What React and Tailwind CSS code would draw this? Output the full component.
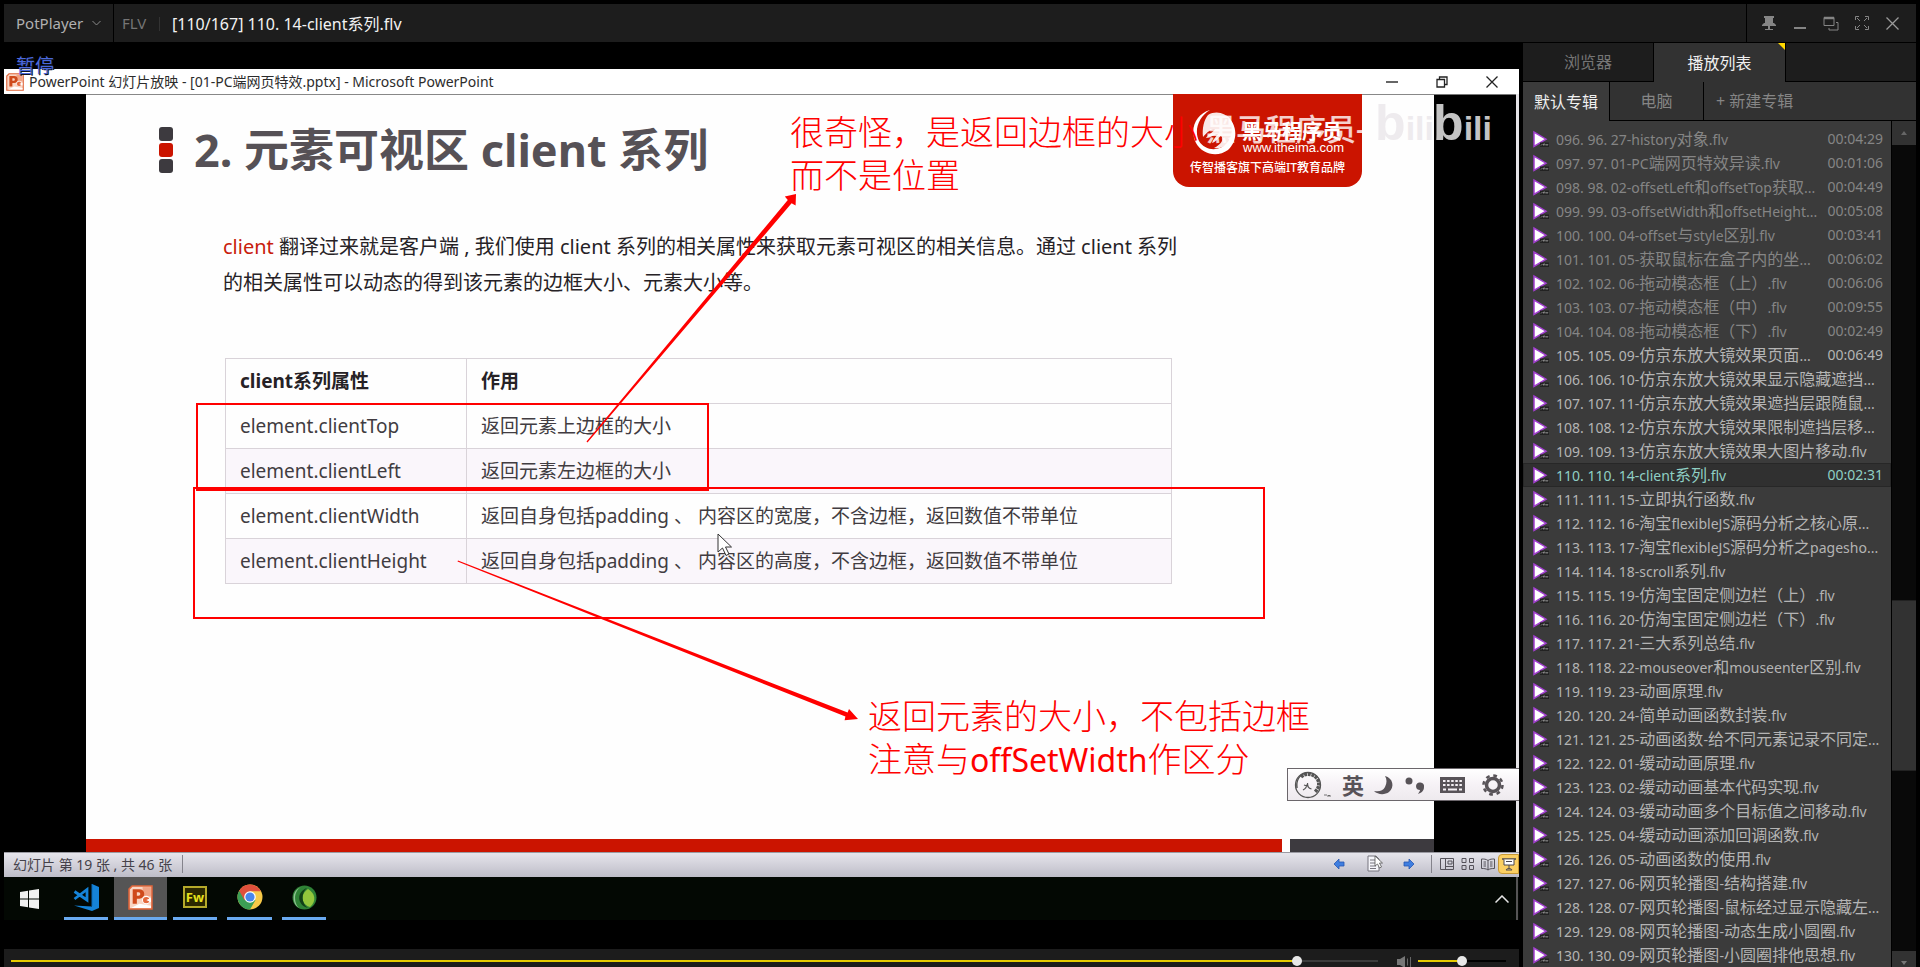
import React from "react";

const PLAYLIST = [
  ["096. 96. 27-history对象.flv", "00:04:29", "seen"],
  ["097. 97. 01-PC端网页特效异读.flv", "00:01:06", "seen"],
  ["098. 98. 02-offsetLeft和offsetTop获取...", "00:04:49", "seen"],
  ["099. 99. 03-offsetWidth和offsetHeight...", "00:05:08", "seen"],
  ["100. 100. 04-offset与style区别.flv", "00:03:41", "seen"],
  ["101. 101. 05-获取鼠标在盒子内的坐...", "00:06:02", "seen"],
  ["102. 102. 06-拖动模态框（上）.flv", "00:06:06", "seen"],
  ["103. 103. 07-拖动模态框（中）.flv", "00:09:55", "seen"],
  ["104. 104. 08-拖动模态框（下）.flv", "00:02:49", "seen"],
  ["105. 105. 09-仿京东放大镜效果页面...", "00:06:49", "new"],
  ["106. 106. 10-仿京东放大镜效果显示隐藏遮挡...", "", "new"],
  ["107. 107. 11-仿京东放大镜效果遮挡层跟随鼠...", "", "new"],
  ["108. 108. 12-仿京东放大镜效果限制遮挡层移...", "", "new"],
  ["109. 109. 13-仿京东放大镜效果大图片移动.flv", "", "new"],
  ["110. 110. 14-client系列.flv", "00:02:31", "current"],
  ["111. 111. 15-立即执行函数.flv", "", "new"],
  ["112. 112. 16-淘宝flexibleJS源码分析之核心原...", "", "new"],
  ["113. 113. 17-淘宝flexibleJS源码分析之pagesho...", "", "new"],
  ["114. 114. 18-scroll系列.flv", "", "new"],
  ["115. 115. 19-仿淘宝固定侧边栏（上）.flv", "", "new"],
  ["116. 116. 20-仿淘宝固定侧边栏（下）.flv", "", "new"],
  ["117. 117. 21-三大系列总结.flv", "", "new"],
  ["118. 118. 22-mouseover和mouseenter区别.flv", "", "new"],
  ["119. 119. 23-动画原理.flv", "", "new"],
  ["120. 120. 24-简单动画函数封装.flv", "", "new"],
  ["121. 121. 25-动画函数-给不同元素记录不同定...", "", "new"],
  ["122. 122. 01-缓动动画原理.flv", "", "new"],
  ["123. 123. 02-缓动动画基本代码实现.flv", "", "new"],
  ["124. 124. 03-缓动动画多个目标值之间移动.flv", "", "new"],
  ["125. 125. 04-缓动动画添加回调函数.flv", "", "new"],
  ["126. 126. 05-动画函数的使用.flv", "", "new"],
  ["127. 127. 06-网页轮播图-结构搭建.flv", "", "new"],
  ["128. 128. 07-网页轮播图-鼠标经过显示隐藏左...", "", "new"],
  ["129. 129. 08-网页轮播图-动态生成小圆圈.flv", "", "new"],
  ["130. 130. 09-网页轮播图-小圆圈排他思想.flv", "", "new"],
];

const ROW_TONE = {
  seen: "text-[#858585] border-transparent",
  new: "text-[#b4b4b4] border-transparent",
  current: "text-[#8fcfc4] bg-[#303030] border-[#272727]",
};

const ATTRIBUTES = [
  ["element.clientTop", "返回元素上边框的大小"],
  ["element.clientLeft", "返回元素左边框的大小"],
  ["element.clientWidth", "返回自身包括padding 、 内容区的宽度，不含边框，返回数值不带单位"],
  ["element.clientHeight", "返回自身包括padding 、 内容区的高度，不含边框，返回数值不带单位"],
];

/* Chinese runs are set two pixels larger than the Latin text around them. */
function Mixed({ text }) {
  return text.split(/([\u3000-\u9fff\uff00-\uffef]+)/).map((part, i) =>
    i % 2 ? (
      <span key={i} className="text-[16px]">{part}</span>
    ) : (
      part
    )
  );
}

function IconButton({ label, className, children }) {
  return (
    <button type="button" aria-label={label} className={`flex items-center justify-center ${className}`}>
      {children}
    </button>
  );
}

function Header() {
  return (
    <header className="flex h-[38px] shrink-0 bg-[#1d1d1d] text-[#8a8a8a]">
      <button type="button" className="flex w-[110px] items-center justify-between border-r border-black pr-3 pl-3 text-[15px] text-[#b0b0b0]">
        PotPlayer
        <svg width="9" height="6" viewBox="0 0 9 6" fill="none" stroke="#8a8a8a"><path d="M.5 1l4 4 4-4" /></svg>
      </button>
      <div className="flex flex-1 items-center pt-px pl-2">
        <span className="w-[37px] text-[15px] text-[#757575]">FLV</span>
        <span className="h-[14px] w-px bg-[#333]" />
        <span className="pl-3 text-[16px] text-[#f2f2f2]">[110/167] 110. 14-client系列.flv</span>
      </div>
      <div className="flex items-center border-l border-black pr-2 pl-[6px]">
        <IconButton label="置顶" className="size-[31px]">
          <svg width="14" height="16" viewBox="0 0 14 16" fill="#858585"><path d="M2 1h10v2h-1v5h1l2 2v1H0v-1l2-2h1V3H2zM6 11h2v3h3v1H3v-1h3z" /></svg>
        </IconButton>
        <IconButton label="最小化" className="size-[31px]">
          <svg width="14" height="16" viewBox="0 0 14 16" fill="#858585"><path d="M1 12h12v2H1z" /></svg>
        </IconButton>
        <IconButton label="还原" className="size-[31px]">
          <svg width="16" height="15" viewBox="0 0 16 15" fill="none" stroke="#858585"><path d="M1 1.500h10v8H1z" /><path d="M1 2h10" strokeWidth="2.500" /><path d="M13 6.500h2v7.500H6v-2" /></svg>
        </IconButton>
        <IconButton label="全屏" className="size-[31px]">
          <svg width="14" height="14" viewBox="0 0 14 14" fill="none" stroke="#858585"><path d="M.5 4V.5H4M10 .5h3.500V4M13.500 10v3.500H10M4 13.500H.5V10M2 2l3 3M12 2L9 5M12 12L9 9M2 12l3-3" /></svg>
        </IconButton>
        <IconButton label="关闭" className="size-[31px]">
          <svg width="13" height="13" viewBox="0 0 13 13" fill="none" stroke="#9a9a9a" strokeWidth="1.300"><path d="M.5 .5l12 12M12.500 .5l-12 12" /></svg>
        </IconButton>
      </div>
    </header>
  );
}

function PlayIcon() {
  return (
    <svg width="16" height="18" viewBox="0 0 16 18" className="shrink-0">
      <path d="M1 2v14.500L13 9.200z" fill="#fff" stroke="#a23fd0" strokeWidth="1.500" />
      <path d="M7 12.500h9V17H7z" fill="#222" />
      <path d="M8 15.500l1.500-1.500M10.500 15.500v-1.500h1.500v1.500M13 14l1 1.500 1-1.500" stroke="#aaa" strokeWidth=".7" fill="none" />
    </svg>
  );
}

function Sidebar() {
  return (
    <aside className="flex w-[393px] shrink-0 flex-col bg-[#1d1d1d]">
      <div className="flex h-[39px] shrink-0 border-b border-black text-[16px]">
        <button type="button" className="w-[131px] border-r border-black text-[#757575]">浏览器</button>
        <button type="button" className="relative -mb-px w-[131px] bg-[#323232] text-[#f0f0f0]">
          播放列表
          <svg width="7" height="7" viewBox="0 0 7 7" className="absolute top-0 right-0" fill="#ffd800"><path d="M0 0h7v7z" /></svg>
        </button>
        <span className="flex-1 border-l border-black" />
      </div>
      <div className="flex h-[39px] shrink-0 bg-[#323232] text-[16px] text-[#858585]">
        <button type="button" className="w-[86px] bg-[#3b3b3b] text-[#f0f0f0]">默认专辑</button>
        <button type="button" className="w-[95px] border-x border-b border-black">电脑</button>
        <button type="button" className="flex-1 border-b border-black pl-3 text-left">+ 新建专辑</button>
      </div>
      <div className="flex min-h-0 flex-1">
        <ul className="min-w-0 flex-1 overflow-hidden bg-[#3b3b3b] pt-[6px] text-[14px]">
          {PLAYLIST.map(([name, time, state]) => (
            <li key={name}>
              <button type="button" className={`flex h-6 w-full items-center gap-[7px] border pr-[7px] pl-[9px] text-left leading-[22px] whitespace-nowrap ${ROW_TONE[state]}`}>
                <PlayIcon />
                <span className="flex-1"><Mixed text={name} /></span>
                <span>{time}</span>
              </button>
            </li>
          ))}
        </ul>
        <div className="flex w-[25px] flex-col border-l border-black bg-[#090909]">
          <IconButton label="向上滚动" className="h-6 shrink-0 bg-[#323232]">
            <svg width="6" height="4" viewBox="0 0 6 4" fill="#666"><path d="M3 0l3 4H0z" /></svg>
          </IconButton>
          <div className="flex min-h-0 flex-1 flex-col">
            <span className="grow-[456]" />
            <span className="grow-[170] border-y border-[#222] bg-[#323232]" />
            <span className="grow-[180]" />
          </div>
          <IconButton label="向下滚动" className="h-4 shrink-0 bg-[#323232] pt-2">
            <svg width="6" height="4" viewBox="0 0 6 4" fill="#777"><path d="M3 4L0 0h6z" /></svg>
          </IconButton>
        </div>
      </div>
    </aside>
  );
}

function PowerPointMark({ size }) {
  return (
    <svg width={size} height={size} viewBox="0 0 24 24">
      <path d="M4 1h19v22H1V4z" fill="#f9d5c3" stroke="#e0653a" strokeWidth="1.500" />
      <path d="M14 2h8v9h-8z" fill="#f0a385" />
      <path d="M4.500 18V4h6.500a4.600 4.600 0 0 1 0 9.200H8.500V18zM8.500 7v3.300h1.700a1.650 1.650 0 0 0 0-3.300z" fill="#cf4a1c" fillRule="evenodd" />
      <circle cx="17.500" cy="14.500" r="3.600" fill="#e4683c" stroke="#fff" />
      <path d="M17.500 14.500l4.500-2v4zM3 22l8-4 11 2v2z" fill="#fff" />
    </svg>
  );
}

function WindowTitle() {
  return (
    <div className="flex h-[25px] shrink-0 items-center bg-white pr-[2px] pl-[2px] text-[#2c2c2c]">
      <PowerPointMark size={18} />
      <span className="flex-1 pl-[5px] text-[14px]">PowerPoint 幻灯片放映 - [01-PC端网页特效.pptx] - Microsoft PowerPoint</span>
      <IconButton label="最小化窗口" className="h-6 w-[50px]">
        <svg width="12" height="12" viewBox="0 0 12 12" stroke="#333" strokeWidth="1.500"><path d="M0 6h12" /></svg>
      </IconButton>
      <IconButton label="还原窗口" className="h-6 w-[50px]">
        <svg width="12" height="12" viewBox="0 0 12 12" fill="none" stroke="#222" strokeWidth="1.300"><path d="M1 3.500h7.500V11H1zM3.500 3.500V1H11v7.500H8.500" /></svg>
      </IconButton>
      <IconButton label="关闭窗口" className="h-6 w-[50px]">
        <svg width="12" height="12" viewBox="0 0 12 12" stroke="#222" strokeWidth="1.300"><path d="M.5 .5l11 11M11.500 .5l-11 11" /></svg>
      </IconButton>
    </div>
  );
}

function BrandBadge() {
  return (
    <div className="absolute top-0 right-[72px] h-[93px] w-[189px] rounded-b-2xl bg-[#cb1400] text-white">
      <svg width="48" height="48" viewBox="0 0 48 48" className="absolute top-[15px] left-[17px]">
        <path d="M20 1C6 5-1 20 6 34c6 11 21 15 32 7C49 31 47 14 36 6c7 8 8 20 1 28-8 9-22 8-28-2C4 22 8 8 20 1z" fill="#fff" />
        <path d="M18 6c8-5 18-2 22 5 4 8 3 18-3 24-3 3-8 5-13 4 8-4 10-9 7-12-3 2-5 6-9 7 1-4 4-6 6-9-4 0-7 4-12 4 2-4 7-5 9-9-4 0-8 3-12 8-1-9 1-17 5-22z" fill="#fff" opacity=".9" />
      </svg>
      <span className="absolute top-[26px] left-[69px] text-[20px] leading-[24px] font-bold whitespace-nowrap">黑马程序员</span>
      <span className="absolute top-[17px] left-[33px] text-[30px] leading-[36px] font-medium whitespace-nowrap text-white/80">黑马程序员-</span>
      <span className="absolute top-[46px] left-[70px] font-['Liberation_Sans',sans-serif] text-[13px] leading-[16px] whitespace-nowrap">www.itheima.com</span>
      <span className="absolute top-[65px] left-[17px] text-[12px] leading-[18px] font-medium whitespace-nowrap">传智播客旗下高端IT教育品牌</span>
    </div>
  );
}

function Annotations() {
  return (
    <div className="pointer-events-none absolute inset-0">
      <svg className="absolute inset-0 size-full" fill="none">
        <rect x="111" y="310" width="511" height="86" stroke="#f00" strokeWidth="2" />
        <rect x="108" y="394" width="1070" height="130" stroke="#f00" strokeWidth="2" />
        <path d="M501.500 348.500L705.600 109.200l4 2.200L710 100l-11.200 2.400 3 3.600L500.500 347.500z" fill="#f00" />
        <path d="M372 466.500L761.600 618.600 763 615l9 10-13.400 1.200.8-3.600L371.500 467.500z" fill="#f00" />
        <path d="M632 440v18l4.500-4 3.500 7.500 3-1.500-3.500-7h6z" fill="#fff" stroke="#333" />
      </svg>
      <p className="absolute top-[17px] left-[704px] text-[34px] leading-[43px] font-light whitespace-nowrap text-[#f00]">
        很奇怪，是返回边框的大小<br />而不是位置
      </p>
      <p className="absolute top-[601px] left-[782px] text-[34px] leading-[43px] font-light whitespace-nowrap text-[#f00]">
        返回元素的大小，不包括边框<br />注意与<span className="text-[32px] font-normal">offSetWidth</span>作区分
      </p>
    </div>
  );
}

function Watermark({ className }) {
  return (
    <span className={`absolute top-0 flex items-baseline font-['Liberation_Sans_Narrow','Liberation_Sans',sans-serif] text-[50px] leading-[58px] font-bold ${className}`}>
      b<span className="text-[34px]">ili</span>
    </span>
  );
}

function InputBar() {
  return (
    <div className="absolute right-0 bottom-[51px] flex h-[33px] w-[232px] items-center border border-r-0 border-[#6b666b] bg-linear-to-b from-white via-[#f6f2f6] to-[#eeeaee] text-[#585358]">
      <svg width="42" height="30" viewBox="0 0 42 30" className="ml-1" fill="none" stroke="#555">
        <circle cx="16" cy="15" r="12.500" strokeWidth="1.300" />
        <path d="M9 7c5-5 14-3 17 3 2 5 0 9-3 12" strokeWidth="3.500" strokeDasharray="3 .7" />
        <path d="M5 18C4 11 7 5 14 3" strokeWidth="1.500" />
        <path d="M11 20c2-1 4-3 4.500-7 0 4 1 5 4 6M15 16l-3-1" strokeWidth="1.200" />
        <path d="M32 25h3M36 27v-2l1 1 1-1v2" strokeWidth=".8" />
      </svg>
      <span className="ml-2 w-[26px] text-[22px] leading-none font-bold">英</span>
      <svg width="28" height="22" viewBox="0 0 28 22" className="ml-1" fill="#585358"><path d="M13 2c8 2 10 11 4 16-4 3-11 3-15-1 5 1 9 0 11-4 2-4 2-8 0-11z" /></svg>
      <svg width="22" height="22" viewBox="0 0 22 22" className="ml-1" fill="#585358"><circle cx="5" cy="7" r="3.500" /><path d="M12 12a4 4 0 1 1 8 1c0 4-3 6-6 7 1-2 2-3 2-4-2 0-4-1-4-4z" /></svg>
      <svg width="26" height="18" viewBox="0 0 26 18" className="ml-[14px]">
        <path d="M0 1h25v16H0z" fill="#585358" />
        <path d="M3 5h19M3 9h19" stroke="#f4f0f4" strokeWidth="2.200" strokeDasharray="2.500 1.600" />
        <path d="M3 13.500h3M8 13.500h9M19 13.500h3" stroke="#f4f0f4" strokeWidth="2.200" />
      </svg>
      <svg width="22" height="22" viewBox="0 0 22 22" className="ml-4" fill="none" stroke="#585358">
        <circle cx="11" cy="11" r="6.500" strokeWidth="3.500" />
        <circle cx="11" cy="11" r="9.500" strokeWidth="2.500" strokeDasharray="3.730 3.730" />
      </svg>
    </div>
  );
}

function Slide() {
  return (
    <div className="relative flex min-h-0 flex-1 bg-black">
      <article className="relative ml-[82px] flex flex-1 flex-col bg-[#fefefe] shadow-[inset_0_1px_0_#888]">
        <div className="flex items-center gap-[21px] pt-[33px] pl-[73px]">
          <div className="flex h-[46px] flex-col justify-between">
            <span className="size-[14px] rounded-[3px] bg-[#3d3a3f]" />
            <span className="size-[14px] rounded-[3px] bg-[#cb1400]" />
            <span className="size-[14px] rounded-[3px] bg-[#3d3a3f]" />
          </div>
          <h1 className="text-[45px] leading-[46px] font-bold whitespace-nowrap text-[#565156]">2. 元素可视区 client 系列</h1>
        </div>
        <p className="pt-14 pl-[137px] text-[20px] leading-[36px] whitespace-nowrap text-[#262226]">
          <span className="text-[#c8200c]">client</span> 翻译过来就是客户端 , 我们使用 client 系列的相关属性来获取元素可视区的相关信息。通过 client 系列
          <br />
          的相关属性可以动态的得到该元素的边框大小、元素大小等。
        </p>
        <table className="mt-[57px] mr-[262px] ml-[139px] table-fixed border-collapse text-left text-[19px] leading-[28px] text-[#413c41]">
          <thead>
            <tr className="h-[45px] text-[#262226]">
              <th className="w-[241px] border border-[#d9d3d9] px-[14px]">client系列属性</th>
              <th className="border border-[#d9d3d9] px-[14px]">作用</th>
            </tr>
          </thead>
          <tbody>
            {ATTRIBUTES.map(([name, effect]) => (
              <tr key={name} className="h-[45px] even:bg-[#faf6fb]">
                <td className="border border-[#d9d3d9] px-[14px]">{name}</td>
                <td className="border border-[#d9d3d9] px-[14px] whitespace-pre">{effect}</td>
              </tr>
            ))}
          </tbody>
        </table>
        <div className="mt-auto flex h-[13px] gap-2">
          <span className="flex-1 bg-[#cb1400]" />
          <span className="w-[144px] bg-[#3d3a3f]" />
        </div>
        <BrandBadge />
        <Annotations />
      </article>
      <div className="w-[82px] border-t border-[#777]" />
      <div className="w-[3px] bg-[#e6e4e8]" />
      <Watermark className="right-[85px] text-[#eeebee]" />
      <Watermark className="right-[27px] text-[#c4c4c4]" />
      <InputBar />
    </div>
  );
}

function StatusBar() {
  return (
    <div className="flex h-[25px] shrink-0 items-center border-t border-[#9a9aa2] bg-linear-to-b from-[#e6e5ec] to-[#bebdc8] pb-[2px] text-[14px] text-[#45424a]">
      <span className="pl-[9px]">幻灯片 第 19 张 , 共 46 张</span>
      <span className="ml-[10px] h-[18px] w-px bg-[#84838c]" />
      <div className="ml-auto flex items-center">
        <IconButton label="上一张" className="w-9">
          <svg width="12" height="12" viewBox="0 0 12 12" fill="#3f7ee0" stroke="#2757b0" strokeWidth=".8"><path d="M1 6l5-5v3h5v4H6v3z" /></svg>
        </IconButton>
        <IconButton label="菜单" className="w-9">
          <svg width="18" height="18" viewBox="0 0 18 18"><path d="M2 1h8l3 3v12H2z" fill="#f5f5fa" stroke="#77757f" /><path d="M4 5h5M4 8h6M4 11h6M4 13.500h6" stroke="#77757f" /><path d="M9 1v10l2.500-2 2 4 2-1-2-4h3z" fill="#fff" stroke="#555" strokeWidth=".8" /></svg>
        </IconButton>
        <IconButton label="下一张" className="w-8">
          <svg width="12" height="12" viewBox="0 0 12 12" fill="#3f7ee0" stroke="#2757b0" strokeWidth=".8"><path d="M11 6L6 1v3H1v4h5v3z" /></svg>
        </IconButton>
        <span className="ml-[6px] h-[18px] w-px bg-[#84838c]" />
        <IconButton label="普通视图" className="ml-[5px] w-5">
          <svg width="14" height="12" viewBox="0 0 14 12" fill="none" stroke="#55525a"><path d="M.5 .5h13v11H.5zM5.500 .5v11M8 3h4v3H8zM6 8.500h7" /></svg>
        </IconButton>
        <IconButton label="幻灯片浏览" className="w-[21px]">
          <svg width="14" height="12" viewBox="0 0 14 12" fill="none" stroke="#55525a"><path d="M1 .5h4v4H1zM8.500 .5h4v4h-4zM1 7.500h4v4H1zM8.500 7.500h4v4h-4z" /></svg>
        </IconButton>
        <IconButton label="阅读视图" className="w-5">
          <svg width="14" height="13" viewBox="0 0 14 13" fill="none" stroke="#55525a"><path d="M7 2.500C5 1 3 1 .5 1v9.500c2.500 0 4.500 0 6.500 1.500 2-1.500 4-1.500 6.500-1.500V1C11 1 9 1 7 2.500zM7 2.500V12M2.500 4H5M2.500 6H5M2.500 8H5M9 4h2.500M9 6h2.500M9 8h2.500" /></svg>
        </IconButton>
        <IconButton label="幻灯片放映" className="h-5 w-[21px] rounded-l-sm border border-[#c99a35] bg-[#fbcf62]">
          <svg width="14" height="13" viewBox="0 0 14 13" fill="none" stroke="#4c4850"><path d="M0 1h14" strokeWidth="1.500" /><path d="M2 1.500v5.500h10V1.500" fill="#fff" /><path d="M4 3.500h6M7 7v3M4 12c1-2 5-2 6 0z" /></svg>
        </IconButton>
      </div>
    </div>
  );
}

function TaskButton({ label, className, children }) {
  return (
    <button type="button" aria-label={label} className={`flex h-full items-center justify-center border-b-[3px] border-[#6aaaf0] ${className}`}>
      {children}
    </button>
  );
}

function Taskbar() {
  return (
    <div className="flex h-[43px] shrink-0 items-center bg-[#030803]">
      <IconButton label="开始" className="ml-1 h-full w-11">
        <svg width="20" height="20" viewBox="0 0 20 20" fill="#f2f2f2"><path d="M0 3l8-1.200V9.400H0zM9 1.600L19 0v9.400H9zM0 10.500h8v7.700L0 17zM9 10.500h10V20L9 18.400z" /></svg>
      </IconButton>
      <TaskButton label="Visual Studio Code" className="ml-3 w-11">
        <svg width="27" height="27" viewBox="0 0 27 27"><path d="M19 0l7 3v21l-7 3L1 21.500l18 1z" fill="#1583d8" /><path d="M19 0v22" stroke="#0b6ab8" /><path d="M1.500 7.500L14 16V5.500L1.500 15" fill="none" stroke="#1583d8" strokeWidth="2.800" /></svg>
      </TaskButton>
      <TaskButton label="PowerPoint" className="ml-[6px] w-[53px] bg-[#555]">
        <PowerPointMark size={25} />
      </TaskButton>
      <TaskButton label="Fireworks" className="ml-[6px] w-11">
        <span className="flex h-[22px] w-6 items-center justify-center border-2 border-[#b5a92a] bg-[#2b2700] text-[13px] leading-none font-bold text-[#e6e11c]">Fw</span>
      </TaskButton>
      <TaskButton label="Chrome" className="ml-[10px] w-[45px]">
        <svg width="26" height="26" viewBox="0 0 26 26">
          <circle cx="13" cy="13" r="12.500" fill="#f7c948" />
          <path d="M13 13L2.200 6.700A12.500 12.500 0 0 0 13 25.500l5.500-9.500z" fill="#3c9e55" />
          <path d="M2.200 6.700A12.500 12.500 0 0 1 24 7.200H13l-5.500 9z" fill="#e0503c" />
          <circle cx="13" cy="13" r="5.800" fill="#fff" /><circle cx="13" cy="13" r="4.600" fill="#4a86ec" />
        </svg>
      </TaskButton>
      <TaskButton label="Camtasia" className="ml-[10px] w-11">
        <svg width="25" height="25" viewBox="0 0 25 25">
          <circle cx="12.500" cy="12.500" r="12" fill="#2f8236" />
          <path d="M9 2C2 6 1 17 7 23 0 19-1 6 9 2z" fill="#8fc193" />
          <path d="M16 4c7 4 9 12 2 18-8-2-11-12-2-18z" fill="#93c63c" />
          <path d="M15 3C4 7 5 20 16 23 9 18 9 8 15 3z" fill="#123f17" />
        </svg>
      </TaskButton>
      <div className="mr-[1px] ml-auto flex h-full items-center border-r-2 border-[#555] pr-[6px]">
        <IconButton label="显示隐藏的图标" className="h-full w-4">
          <svg width="14" height="8" viewBox="0 0 14 8" fill="none" stroke="#e6e6e6" strokeWidth="1.500"><path d="M.5 7.500L7 1l6.500 6.500" /></svg>
        </IconButton>
      </div>
    </div>
  );
}

const RANGE =
  "h-[10px] appearance-none bg-transparent [&::-webkit-slider-runnable-track]:h-[2px] [&::-webkit-slider-thumb]:mt-[-4px] [&::-webkit-slider-thumb]:size-[10px] [&::-webkit-slider-thumb]:appearance-none [&::-webkit-slider-thumb]:rounded-full [&::-webkit-slider-thumb]:bg-[#e8e8e8]";

function Transport() {
  return (
    <div className="mt-[29px] flex h-[18px] shrink-0 items-start overflow-hidden bg-[#1c1c1c] pt-[7px] pr-[13px] pl-[7px]">
      <input type="range" aria-label="播放进度" min="0" max="1000" defaultValue="944"
        className={`${RANGE} min-w-0 flex-1 [&::-webkit-slider-runnable-track]:bg-[linear-gradient(to_right,#e6cb00_94%,#3c3c3c_94%)]`} />
      <svg width="15" height="12" viewBox="0 0 15 12" className="mr-[6px] ml-[19px]"><path d="M0 3h3l5-3v12L3 9H0z" fill="#777" /><path d="M10.500 2.500v7M13.500 1v10" stroke="#666" /></svg>
      <input type="range" aria-label="音量" min="0" max="100" defaultValue="50"
        className={`${RANGE} w-[88px] [&::-webkit-slider-runnable-track]:bg-[linear-gradient(to_right,#e6cb00_50%,#000_50%)]`} />
    </div>
  );
}

export default function App() {
  return (
    <div className="flex h-screen flex-col bg-black px-1 pt-1 font-['Noto_Sans','Noto_Sans_CJK_SC',sans-serif]">
      <Header />
      <div className="flex min-h-0 flex-1 gap-1">
        <main className="relative flex min-w-0 flex-1 flex-col pt-[27px]">
          <WindowTitle />
          <Slide />
          <StatusBar />
          <Taskbar />
          <Transport />
          <span className="absolute top-[11px] left-3 text-[19px] leading-[26px] text-[#4a68dc] [text-shadow:1px_1px_0_#10131f]">暂停</span>
        </main>
        <div className="flex pt-px">
          <Sidebar />
        </div>
      </div>
    </div>
  );
}
